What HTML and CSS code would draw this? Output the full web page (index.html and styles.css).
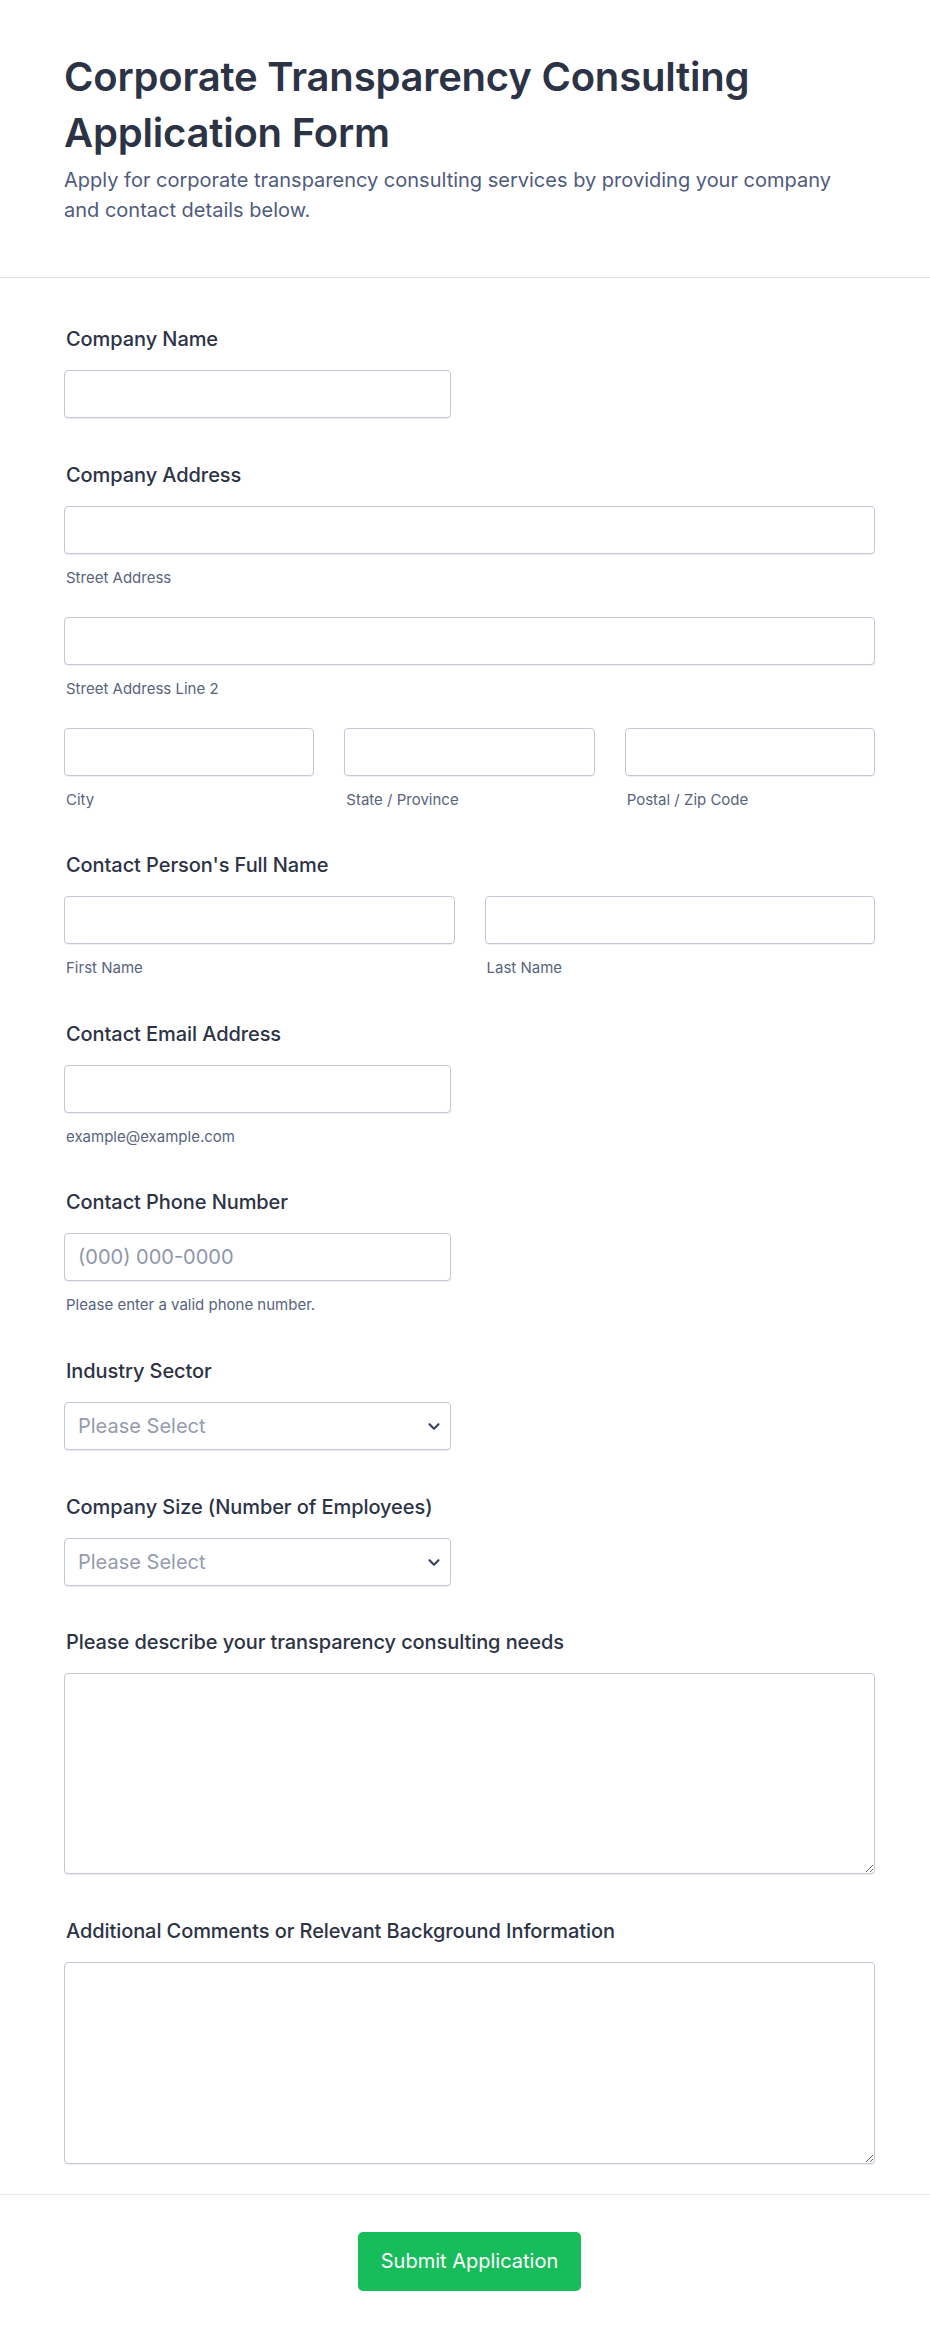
FILE: index.html
```html
<!DOCTYPE html>
<html lang="en">
<head>
<meta charset="utf-8">
<title>Corporate Transparency Consulting Application Form</title>
<link rel="stylesheet" href="styles.css">
</head>
<body>
<div class="page">
  <header class="header">
    <h1 class="title">Corporate Transparency Consulting Application Form</h1>
    <p class="subtitle">Apply for corporate transparency consulting services by providing your company and contact details below.</p>
  </header>

  <form class="form">
    <div class="field">
      <label class="label">Company Name</label>
      <input class="input input-half" type="text">
    </div>

    <div class="field">
      <label class="label">Company Address</label>
      <div class="group">
        <div class="sub">
          <input class="input" type="text">
          <span class="sublabel">Street Address</span>
        </div>
        <div class="sub">
          <input class="input" type="text">
          <span class="sublabel">Street Address Line 2</span>
        </div>
        <div class="row row-3">
          <div class="sub">
            <input class="input" type="text">
            <span class="sublabel">City</span>
          </div>
          <div class="sub">
            <input class="input" type="text">
            <span class="sublabel">State / Province</span>
          </div>
          <div class="sub">
            <input class="input" type="text">
            <span class="sublabel">Postal / Zip Code</span>
          </div>
        </div>
      </div>
    </div>

    <div class="field">
      <label class="label">Contact Person's Full Name</label>
      <div class="row row-2">
        <div class="sub">
          <input class="input" type="text">
          <span class="sublabel">First Name</span>
        </div>
        <div class="sub">
          <input class="input" type="text">
          <span class="sublabel">Last Name</span>
        </div>
      </div>
    </div>

    <div class="field">
      <label class="label">Contact Email Address</label>
      <div class="sub">
        <input class="input input-half" type="email">
        <span class="sublabel">example@example.com</span>
      </div>
    </div>

    <div class="field">
      <label class="label">Contact Phone Number</label>
      <div class="sub">
        <input class="input input-half" type="tel" placeholder="(000) 000-0000">
        <span class="sublabel">Please enter a valid phone number.</span>
      </div>
    </div>

    <div class="field">
      <label class="label">Industry Sector</label>
      <div class="select-wrap">
        <select class="input select">
          <option>Please Select</option>
        </select>
        <svg class="chevron" width="14" height="9" viewBox="0 0 14 9" aria-hidden="true"><path d="M2.5 2.2l4.5 4.5 4.5-4.5" fill="none" stroke="#3b4561" stroke-width="2.2" stroke-linecap="round" stroke-linejoin="round"/></svg>
      </div>
    </div>

    <div class="field">
      <label class="label">Company Size (Number of Employees)</label>
      <div class="select-wrap">
        <select class="input select">
          <option>Please Select</option>
        </select>
        <svg class="chevron" width="14" height="9" viewBox="0 0 14 9" aria-hidden="true"><path d="M2.5 2.2l4.5 4.5 4.5-4.5" fill="none" stroke="#3b4561" stroke-width="2.2" stroke-linecap="round" stroke-linejoin="round"/></svg>
      </div>
    </div>

    <div class="field">
      <label class="label">Please describe your transparency consulting needs</label>
      <textarea class="input textarea"></textarea>
    </div>

    <div class="field">
      <label class="label">Additional Comments or Relevant Background Information</label>
      <textarea class="input textarea textarea-b"></textarea>
    </div>
  </form>

  <div class="footer">
    <button class="submit" type="button">Submit Application</button>
  </div>
</div>
</body>
</html>
```

FILE: styles.css
```css
* {
  box-sizing: border-box;
}

html, body {
  margin: 0;
  padding: 0;
  background: #ffffff;
}

body {
  font-family: Inter, "Noto Sans", "Liberation Sans", sans-serif;
  color: #2c3345;
}

.page {
  width: 930px;
  background: #ffffff;
}

.header {
  padding: 49px 55px 52px 64px;
  border-bottom: 1px solid #dfe1ec;
}

.title {
  margin: 0;
  font-size: 40px;
  line-height: 56px;
  font-weight: 600;
  letter-spacing: -0.2px;
  color: #2c3345;
}

.subtitle {
  margin: 4px 0 0 0;
  max-width: 780px;
  font-size: 20px;
  line-height: 30px;
  font-weight: 400;
  color: #4f5b7c;
}

.form {
  display: flex;
  flex-direction: column;
  gap: 41.6px;
  padding: 46px 55px 30px 64px;
}

.field {
  display: flex;
  flex-direction: column;
}

.label {
  display: block;
  padding-left: 2px;
  margin-bottom: 16px;
  font-size: 20px;
  line-height: 30px;
  font-weight: 500;
  letter-spacing: -0.08px;
  color: #2c3345;
}

.group {
  display: flex;
  flex-direction: column;
  gap: 30px;
}

.row {
  display: grid;
  column-gap: 30px;
}

.row-3 {
  grid-template-columns: 1fr 1fr 1fr;
}

.row-2 {
  grid-template-columns: 1fr 1fr;
}

.sub {
  display: flex;
  flex-direction: column;
}

.sublabel {
  display: block;
  padding-left: 2px;
  margin-top: 15px;
  font-size: 15px;
  line-height: 18px;
  color: #57647e;
}

.input {
  display: block;
  width: 100%;
  height: 48px;
  margin: 0;
  padding: 0 13px;
  border: 1px solid #c3c8d6;
  border-radius: 4px;
  background: #ffffff;
  box-shadow: 0 1px 0 rgba(60, 70, 100, 0.08);
  font-family: Inter, "Noto Sans", "Liberation Sans", sans-serif;
  font-size: 20px;
  color: #2c3345;
  outline: none;
}

.input::placeholder {
  color: #8d96aa;
}

.input-half {
  width: 387px;
}

.select-wrap {
  position: relative;
  width: 387px;
}

.select {
  appearance: none;
  -webkit-appearance: none;
  color: #939bae;
  padding-right: 40px;
}

.chevron {
  position: absolute;
  right: 10px;
  top: 20px;
  pointer-events: none;
}

.textarea {
  height: 201px;
  padding: 12px 13px;
  resize: vertical;
}

.textarea-b {
  height: 202px;
}

.footer {
  display: flex;
  justify-content: center;
  padding: 37px 55px 50px 64px;
  border-top: 1px solid #e6e8f0;
}

.submit {
  height: 59px;
  padding: 0 23px;
  border: none;
  border-radius: 5px;
  background: #18bd5b;
  color: #ffffff;
  font-family: Inter, "Noto Sans", "Liberation Sans", sans-serif;
  font-size: 20px;
  font-weight: 400;
  cursor: pointer;
}
```
